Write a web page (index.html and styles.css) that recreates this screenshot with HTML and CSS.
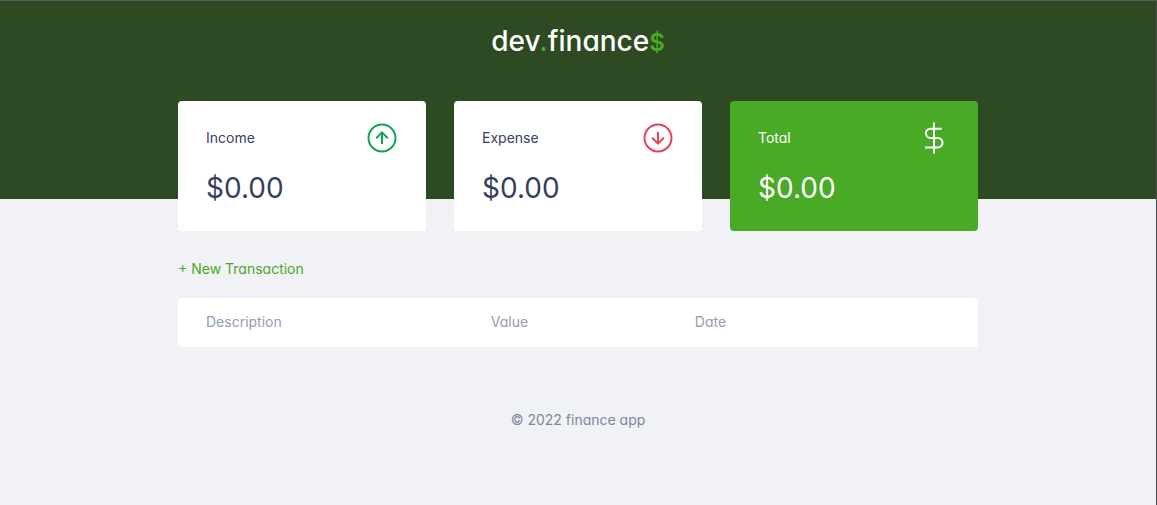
FILE: index.html
```html
<!DOCTYPE html>
<html lang="en">
<head>
<meta charset="utf-8">
<meta name="viewport" content="width=device-width, initial-scale=1">
<title>dev.finance$</title>
<link rel="stylesheet" href="styles.css">
</head>
<body>
<header class="header">
  <h1 class="logo">dev<span class="logo-accent">.</span>finance<span class="logo-accent logo-dollar">$</span></h1>
</header>
<main class="container">
  <section class="balance" aria-label="Balance">
    <article class="card">
      <h2 class="card-title">Income
        <svg class="icon income" viewBox="0 0 32 32" aria-hidden="true"><circle cx="16" cy="16" r="13.5"/><path d="M16 22V10.5M10.2 16.2L16 10.4l5.8 5.8"/></svg>
      </h2>
      <p class="amount">$0.00</p>
    </article>
    <article class="card">
      <h2 class="card-title">Expense
        <svg class="icon expense" viewBox="0 0 32 32" aria-hidden="true"><circle cx="16" cy="16" r="13.5"/><path d="M16 10v11.5M10.2 15.8l5.8 5.8 5.8-5.8"/></svg>
      </h2>
      <p class="amount">$0.00</p>
    </article>
    <article class="card total">
      <h2 class="card-title">Total
        <svg class="icon" viewBox="0 0 32 32" aria-hidden="true"><path d="M16 .5v31M23.7 6.7H12.5a4.6 4.6 0 0 0 0 9.2h7.2a4.8 4.8 0 0 1 0 9.6H7"/></svg>
      </h2>
      <p class="amount">$0.00</p>
    </article>
  </section>
  <section class="transactions" aria-label="Transactions">
    <button class="new" type="button">+ New Transaction</button>
    <table class="table">
      <thead>
        <tr><th class="col-description">Description</th><th class="col-value">Value</th><th>Date</th></tr>
      </thead>
    </table>
  </section>
</main>
<footer class="footer"><p>© 2022 finance app</p></footer>
</body>
</html>
```
FILE: styles.css
```css
* {
  box-sizing: border-box;
  margin: 0;
  padding: 0;
}

body {
  min-height: 100vh;
  border-top: 1px solid #5c5c5e;
  border-right: 1px solid #4a4a4c;
  background: #f0f2f5;
  color: #363f5f;
  font: 400 14px/20px Inter, sans-serif;
  font-feature-settings: "cv11";
}

.header {
  height: 198px;
  padding-top: 20px;
  background: #2d4a22;
  text-align: center;
}

.logo {
  color: #fff;
  font-size: 28px;
  font-weight: 500;
  line-height: 40px;
}

.logo-accent {
  color: #49aa26;
}

.logo-dollar {
  font-size: 24px;
  font-weight: 600;
}

.container {
  width: min(90vw, 800px);
  margin: -98px auto 0;
}

.balance {
  display: grid;
  grid-template-columns: repeat(3, 1fr);
  gap: 28px;
}

.card {
  padding: 21px 28px 22px;
  border-radius: 4px;
  background: #fff;
}

.card-title {
  display: flex;
  align-items: center;
  justify-content: space-between;
  font-size: 14px;
  font-weight: 400;
}

.icon {
  width: 32px;
  height: 32px;
  fill: none;
  stroke: currentColor;
  stroke-width: 2;
}

.income {
  color: #12a454;
}

.expense {
  color: #e83f5b;
}

.amount {
  margin-top: 14px;
  font-size: 28px;
  line-height: 41px;
}

.total {
  background: #49aa26;
  color: #fff;
}

.transactions {
  margin-top: 28px;
}

.new {
  display: block;
  margin-bottom: 19px;
  border: 0;
  background: none;
  color: #49aa26;
  font: inherit;
  font-feature-settings: inherit;
  cursor: pointer;
}

.table {
  width: 100%;
  border-spacing: 0;
  border-radius: 4px;
  background: #fff;
  table-layout: fixed;
}

.table th {
  padding: 14px 28px 15px;
  color: #969cb3;
  font-weight: 400;
  text-align: left;
}

.col-description {
  width: 35.6%;
}

.col-value {
  width: 25.5%;
}

.footer {
  padding: 63px 0 28px;
  color: #7f869f;
  text-align: center;
}
```
